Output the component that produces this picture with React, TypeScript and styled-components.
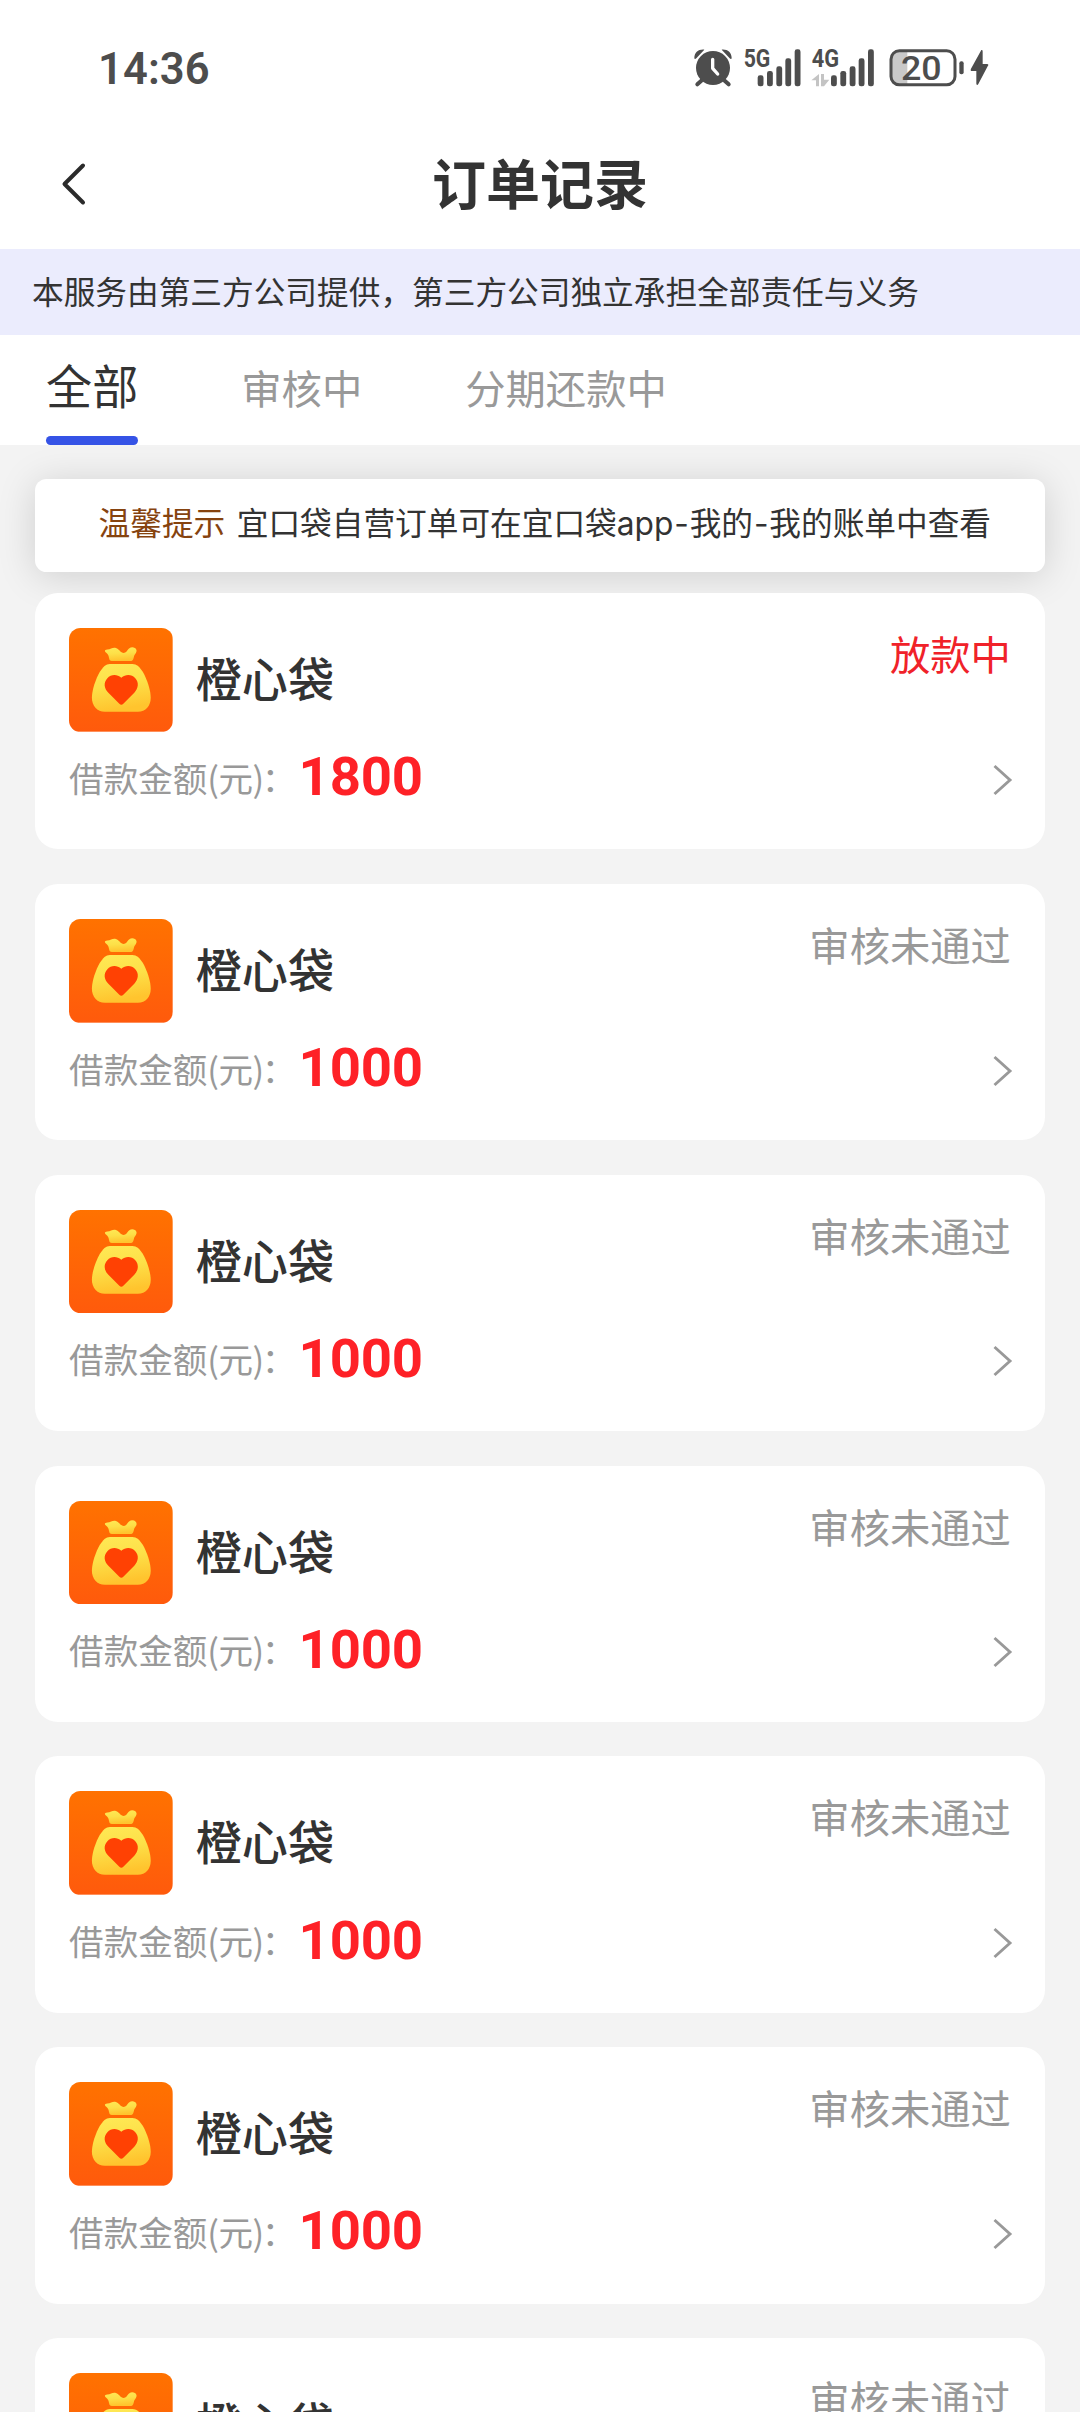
import React from "react";
import styled, { createGlobalStyle } from "styled-components";

const GlobalStyle = createGlobalStyle`
  * { box-sizing: border-box; }
  body {
    margin: 0;
    background: #f3f3f3;
    font-family: "Noto Sans CJK SC", "Noto Sans", sans-serif;
    color: #333;
  }
`;

const Page = styled.main`
  width: 1080px;
  height: 2412px;
  overflow: hidden;
  background: #f3f3f3;
  display: flex;
  flex-direction: column;
`;

const StatusBar = styled.header`
  flex: none;
  display: flex;
  align-items: flex-start;
  justify-content: space-between;
  height: 120px;
  padding: 42px 91px 0 98px;
  background: #fff;
`;

const Clock = styled.time`
  margin-top: 2px;
  font: 600 43.5px/51px Roboto, sans-serif;
  letter-spacing: 0.1px;
  color: #4d4d4d;
`;

const StatusIcons = styled.div`
  display: flex;
  padding-top: 6px;
`;

const StatusIcon = styled.svg<{ $before?: number }>`
  display: block;
  height: 40px;
  margin-left: ${(p) => p.$before ?? 0}px;
  overflow: visible;
  fill: #4d4d4d;
  font-family: Roboto, sans-serif;
`;

const NavBar = styled.nav`
  flex: none;
  display: grid;
  grid-template-columns: 150px 1fr 150px;
  align-items: center;
  height: 129px;
  background: #fff;
`;

const BackButton = styled.button`
  display: flex;
  width: 48px;
  height: 48px;
  margin: 0 0 1px 50px;
  padding: 0;
  border: 0;
  background: none;
`;

const Title = styled.h1`
  margin: 0 0 6px;
  font-size: 54px;
  font-weight: 700;
  line-height: 78px;
  text-align: center;
`;

const Disclaimer = styled.p`
  flex: none;
  height: 86px;
  margin: 0;
  padding-left: 32px;
  background: #ebecfd;
  font-size: 31.68px;
  line-height: 82px;
  white-space: nowrap;
`;

const Tabs = styled.div`
  flex: none;
  display: flex;
  gap: 103px;
  height: 110px;
  padding-left: 46.08px;
  background: #fff;
  position: relative;
  z-index: 1;
`;

const Tab = styled.button<{ $active?: boolean }>`
  display: flex;
  flex-direction: column;
  justify-content: space-between;
  padding: 0;
  border: 0;
  background: none;
  font-family: inherit;
  font-size: ${(p) => (p.$active ? 46.08 : 40.32)}px;
  line-height: ${(p) => (p.$active ? 98 : 103)}px;
  white-space: nowrap;
  color: ${(p) => (p.$active ? "#333" : "#999")};

  &::after {
    content: "";
    width: 100%;
    height: ${(p) => (p.$active ? 9 : 0)}px;
    border-radius: 4.5px;
    background: #3553e6;
  }
`;

const Tip = styled.div`
  flex: none;
  display: flex;
  gap: 11.5px;
  height: 93.5px;
  margin: 33.7px 34.56px 0;
  padding-left: 64px;
  border-radius: 11.5px;
  background: #fff;
  box-shadow: 0 4px 38px rgba(0, 0, 0, 0.15);
  font-size: 31.68px;
  line-height: 85px;
  white-space: nowrap;
`;

const TipLabel = styled.strong`
  font-weight: 400;
  color: #86430f;
`;

const Latin = styled.span`
  font-family: Inter, sans-serif;
  line-height: 1;
`;

const Dash = styled(Latin)`
  display: inline-block;
  width: 16.3px;
  text-align: center;
`;

const OrderList = styled.ul`
  position: relative;
  display: flex;
  flex-direction: column;
  gap: 34.56px;
  margin: 0;
  padding: 20.8px 34.56px 0;
  list-style: none;
`;

const OrderCard = styled.li`
  flex: none;
  height: 256.32px;
  padding: 35px 34.56px 0;
  border-radius: 23px;
  background: #fff;
`;

const OrderHead = styled.div`
  display: flex;
  height: 103.68px;
`;

const Logo = styled.svg`
  flex: none;
  width: 103.68px;
  height: 103.68px;
  border-radius: 11.5px;
`;

const OrderName = styled.h2`
  flex: 1;
  margin: 0 0 0 23px;
  font-size: 46.08px;
  font-weight: 500;
  line-height: 98px;
`;

const OrderState = styled.span<{ $live?: boolean }>`
  font-size: 40.32px;
  line-height: 49px;
  color: ${(p) => (p.$live ? "#f02229" : "#999")};
`;

const OrderFoot = styled.div`
  display: flex;
  align-items: center;
  height: 96px;
`;

const AmountLabel = styled.span`
  width: 229.5px;
  margin-top: -6px;
  font-size: 34.56px;
  line-height: 50px;
  white-space: nowrap;
  color: #999;
`;

const Unit = styled.span`
  letter-spacing: -0.5px;
`;

const Colon = styled.span`
  margin-left: -2px;
`;

const Amount = styled.span`
  flex: 1;
  margin-top: -7px;
  font: 700 54.5px/64px Roboto, sans-serif;
  letter-spacing: -0.2px;
  color: #fe2127;
`;

const Chevron = styled.svg`
  width: 22px;
  height: 34px;
  margin-right: -2px;
  fill: none;
  stroke: #999;
  stroke-width: 2.9;
`;

const BARS = [
  { x: 0, top: 78 },
  { x: 28, top: 65 },
  { x: 56, top: 51 },
  { x: 83, top: 27 },
  { x: 111, top: 0 },
];

function SignalBars({ x }: { x: number }) {
  return (
    <g>
      {BARS.map((b) => (
        <rect key={b.x} x={x + b.x} y={4 + b.top} width="17.5" height={111 - b.top} rx="7" />
      ))}
    </g>
  );
}

function AlarmIcon() {
  return (
    <StatusIcon width="38" viewBox="0 0 114 120">
      <path d="M1 30C1 14 14 3 31 5L7 31C4 34 1 34 1 30ZM113 30C113 14 100 3 83 5L107 31C110 34 113 34 113 30Z" />
      <path d="M22 98L10 109M92 98L104 109" stroke="#4d4d4d" strokeWidth="12" strokeLinecap="round" />
      <circle cx="57" cy="60" r="51" />
      <path d="M56 34V61L71 78" fill="none" stroke="#fff" strokeWidth="10" strokeLinecap="round" strokeLinejoin="round" />
    </StatusIcon>
  );
}

function Signal5G() {
  return (
    <StatusIcon $before={12} width="57" viewBox="0 0 171 120">
      <text x="-1" y="58" fontSize="77" fontWeight="700" textLength="80" lengthAdjust="spacingAndGlyphs">5G</text>
      <SignalBars x={41} />
    </StatusIcon>
  );
}

function Signal4G() {
  return (
    <StatusIcon $before={9} width="64" viewBox="0 0 192 120">
      <text x="5" y="58" fontSize="77" fontWeight="700" textLength="82" lengthAdjust="spacingAndGlyphs">4G</text>
      <path d="M27 78V115H18V97H4ZM33 115V78H42V95H58L42 115Z" fill="#c4c4c4" />
      <SignalBars x={63} />
    </StatusIcon>
  );
}

function BatteryIcon() {
  return (
    <StatusIcon $before={14} width="101" viewBox="0 0 303 120">
      <path d="M31 11H58V108H31C18 108 11 99 11 87V32C11 20 18 11 31 11Z" fill="#c9c9c9" />
      <rect x="9" y="8.5" width="192" height="102" rx="25" fill="none" stroke="#4d4d4d" strokeWidth="9" />
      <text x="39" y="96.5" fontSize="102" fontWeight="500" textLength="122" lengthAdjust="spacingAndGlyphs">20</text>
      <rect x="214" y="40" width="13" height="39" rx="6" />
      <path d="M280 6C284 5 284 8 284 12V48H297C302 48 302 52 299 55L271 108C268 113 265 111 265 106V69H252C248 69 247 66 249 62Z" />
    </StatusIcon>
  );
}

function MoneyBag() {
  return (
    <Logo viewBox="0 0 104 104">
      <defs>
        <linearGradient id="tile" x1="0" y1="0" x2="0" y2="1">
          <stop offset="0" stopColor="#ff7200" />
          <stop offset="1" stopColor="#ff5a0c" />
        </linearGradient>
        <linearGradient id="bag" x1="0" y1="0" x2="0.2" y2="1">
          <stop offset="0" stopColor="#ffe956" />
          <stop offset="0.5" stopColor="#fde048" />
          <stop offset="1" stopColor="#ffc42e" />
        </linearGradient>
      </defs>
      <rect width="104" height="104" fill="url(#tile)" />
      <path
        d="M36.5 24C35.2 22.6 36.5 21.8 38.5 21.6C42 21.4 44 19 47 20C50.5 21 51.5 25 55 25C59 25 58.5 19.6 63.5 19.4C67.5 19.5 69 23 66.8 25.5C64.5 28 65.5 30.5 63.5 32.5C63 33 62 33 61 33H43C40 33 40.5 30 39.5 27.5C39 26 37.5 25 36.5 24Z"
        fill="url(#bag)"
      />
      <path
        d="M41 36H63.5C68 36 71 39 74 44C78.5 52 82 63 82 70C82 78 77 84 69 84H36C28 84 23 78 23 70C23 62 27 51 31 44C34 39 37 36 41 36Z"
        fill="url(#bag)"
      />
      <path
        d="M52.5 50C57 46 63 46.5 66.5 50.5C70.5 55 69.5 60.5 65.5 65L54.5 76Q52.5 78 50.5 76L39.5 65C35 60.5 34.5 55 38.5 50.5C42 46.5 48 46 52.5 50Z"
        fill="#ff4103"
      />
    </Logo>
  );
}

type Order = { amount: number; state: string; live?: boolean };

const orders: Order[] = [
  { amount: 1800, state: "放款中", live: true },
  ...Array.from({ length: 6 }, () => ({ amount: 1000, state: "审核未通过" })),
];

function OrderItem({ order }: { order: Order }) {
  return (
    <OrderCard>
      <OrderHead>
        <MoneyBag />
        <OrderName>橙心袋</OrderName>
        <OrderState $live={order.live}>{order.state}</OrderState>
      </OrderHead>
      <OrderFoot>
        <AmountLabel>
          借款金额<Unit>(元)</Unit>
          <Colon>：</Colon>
        </AmountLabel>
        <Amount>{order.amount}</Amount>
        <Chevron viewBox="0 0 22 34">
          <path d="M3.5 3L19 17L3.5 31" />
        </Chevron>
      </OrderFoot>
    </OrderCard>
  );
}

export default function App() {
  return (
    <>
      <GlobalStyle />
      <Page>
        <StatusBar>
          <Clock>14:36</Clock>
          <StatusIcons>
            <AlarmIcon />
            <Signal5G />
            <Signal4G />
            <BatteryIcon />
          </StatusIcons>
        </StatusBar>
        <NavBar>
          <BackButton aria-label="返回">
            <svg width="48" height="48" viewBox="0 0 48 48" fill="none" stroke="#2b2b2b" strokeWidth="4" strokeLinecap="round" strokeLinejoin="round">
              <path d="M33 5.5L14.5 24L33 42.5" />
            </svg>
          </BackButton>
          <Title>订单记录</Title>
        </NavBar>
        <Disclaimer>本服务由第三方公司提供，第三方公司独立承担全部责任与义务</Disclaimer>
        <Tabs>
          <Tab $active>全部</Tab>
          <Tab>审核中</Tab>
          <Tab>分期还款中</Tab>
        </Tabs>
        <Tip>
          <TipLabel>温馨提示</TipLabel>
          <span>
            宜口袋自营订单可在宜口袋<Latin>app</Latin>
            <Dash>-</Dash>我的<Dash>-</Dash>我的账单中查看
          </span>
        </Tip>
        <OrderList>
          {orders.map((order, i) => (
            <OrderItem key={i} order={order} />
          ))}
        </OrderList>
      </Page>
    </>
  );
}
